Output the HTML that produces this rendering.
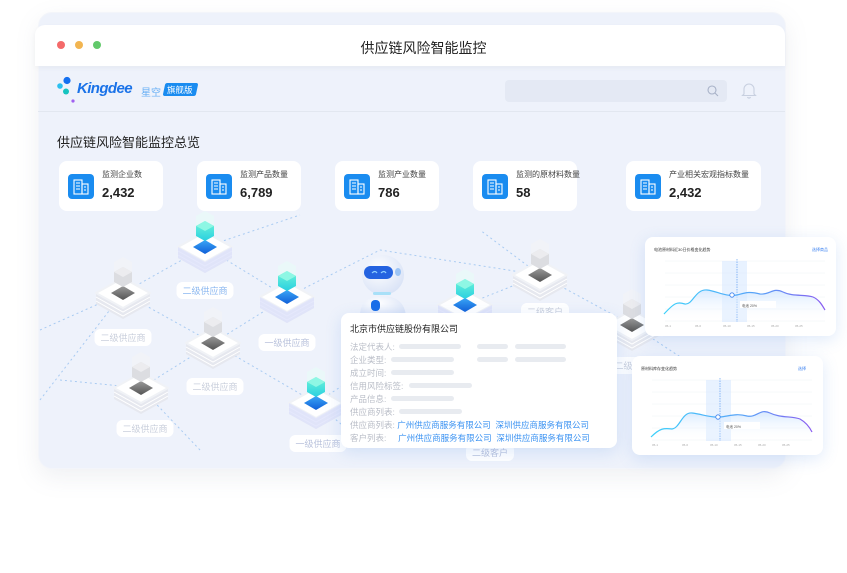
<!DOCTYPE html>
<html><head><meta charset="utf-8">
<style>
*{margin:0;padding:0;box-sizing:border-box}
body{width:847px;height:573px;background:#fff;font-family:"Liberation Sans","Noto Sans CJK SC",sans-serif;position:relative;overflow:hidden}
.abs{position:absolute}
.frame{left:38px;top:12px;width:748px;height:457px;border-radius:14px;background:#eef2fb;border:1px solid #f3f5fa;box-shadow:0 8px 24px rgba(120,130,160,.12)}
.titlebar{left:35px;top:25px;width:750px;height:41px;background:#fff;border-radius:10px 10px 0 0;box-shadow:0 2px 6px rgba(0,0,0,.04)}
.dot{width:8px;height:8px;border-radius:50%;top:41px}
.card{background:#fff;border-radius:8px;height:50px;top:161px}
.card .ic{position:absolute;left:9px;top:13px;width:26px;height:25px;background:#1a8cf0;border-radius:4px}
.card .t{position:absolute;left:43px;top:8px;font-size:8px;color:#444;white-space:nowrap}
.card .v{position:absolute;left:43px;top:24px;font-size:13px;font-weight:bold;color:#222}
.lbl{background:#fff;border-radius:6px;font-size:9px;color:#c9cfdc;padding:2px 6px;white-space:nowrap;transform:translateX(-50%)}
.pop{left:341px;top:313px;width:276px;height:135px;background:#fff;border-radius:8px;box-shadow:0 4px 16px rgba(80,140,230,.18)}
.row{position:absolute;left:9px;font-size:8.5px;color:#b9bdc7;white-space:nowrap}
.bar{position:absolute;height:5px;background:#e8ebf0;border-radius:3px}
.lnk{color:#3a92f2}
.chart{background:#fff;border-radius:8px;box-shadow:0 4px 16px rgba(80,140,230,.18)}
</style></head><body>
<div class="abs frame"></div>
<div class="abs titlebar"></div>
<div class="abs dot" style="left:57px;background:#f46a6a"></div>
<div class="abs dot" style="left:75px;background:#f2b551"></div>
<div class="abs dot" style="left:93px;background:#62c96b"></div>
<div class="abs" style="left:0;width:847px;top:38px;text-align:center;font-size:14px;color:#222">供应链风险智能监控</div>

<!-- header -->
<svg class="abs" style="left:56px;top:76px" width="22" height="28"><circle cx="11" cy="4.5" r="3.6" fill="#1570f0"/><circle cx="4" cy="10" r="2.8" fill="#2bc0f0"/><circle cx="10" cy="15.5" r="3" fill="#16c4c0"/><circle cx="17" cy="25" r="1.6" fill="#a060f0"/></svg>
<div class="abs" style="left:77px;top:80px;font-size:15px;font-weight:bold;font-style:italic;color:#1a72e8;letter-spacing:-.6px">Kingdee</div>
<div class="abs" style="left:141px;top:84px;font-size:10px;color:#6ab0f5">星空</div>
<div class="abs" style="left:164px;top:83px;width:33px;height:13px;background:#1a8cf0;transform:skewX(-12deg);border-radius:2px"></div>
<div class="abs" style="left:167px;top:84px;font-size:8.5px;color:#fff">旗舰版</div>
<div class="abs" style="left:505px;top:80px;width:222px;height:22px;background:#e4e9f4;border-radius:4px"></div>
<svg class="abs" style="left:706px;top:84px" width="14" height="14"><circle cx="6" cy="6" r="4" fill="none" stroke="#a8b2c8" stroke-width="1.1"/><path d="M9 9l3 3" stroke="#a8b2c8" stroke-width="1.1"/></svg>
<svg class="abs" style="left:741px;top:81px" width="16" height="18"><path d="M3 13V8a5 5 0 0 1 10 0v5l1.5 1.5h-13z" fill="none" stroke="#c8d0e0" stroke-width="1.1"/><path d="M6.5 16a1.6 1.6 0 0 0 3 0" fill="none" stroke="#c8d0e0" stroke-width="1.1"/></svg>
<div class="abs" style="left:38px;top:111px;width:747px;height:1px;background:#e2e7f0"></div>

<div class="abs" style="left:57px;top:132px;font-size:13px;color:#222">供应链风险智能监控总览</div>

<div class="abs card" style="left:59px;width:104px"><div class="ic"></div><div class="t">监测企业数</div><div class="v">2,432</div></div>
<div class="abs card" style="left:197px;width:104px"><div class="ic"></div><div class="t">监测产品数量</div><div class="v">6,789</div></div>
<div class="abs card" style="left:335px;width:104px"><div class="ic"></div><div class="t">监测产业数量</div><div class="v">786</div></div>
<div class="abs card" style="left:473px;width:104px"><div class="ic"></div><div class="t">监测的原材料数量</div><div class="v">58</div></div>
<div class="abs card" style="left:626px;width:135px"><div class="ic"></div><div class="t">产业相关宏观指标数量</div><div class="v">2,432</div></div>
<svg class="abs" style="left:0;top:0" width="847" height="573">
<defs>
<g id="bicon"><rect x="6" y="6" width="8" height="14" fill="none" stroke="#fff" stroke-width="1.1"/><rect x="14" y="10" width="6" height="10" fill="none" stroke="#fff" stroke-width="1.1"/><path d="M8 9h4M8 12h4M8 15h4M16 13h2M16 16h2" stroke="#fff" stroke-width="1"/></g>
<linearGradient id="chipG" x1="0" y1="0" x2="0" y2="1"><stop offset="0" stop-color="#9a9a9a"/><stop offset="1" stop-color="#555"/></linearGradient>
<linearGradient id="chipB" x1="0" y1="0" x2="0" y2="1"><stop offset="0" stop-color="#3aa6f6"/><stop offset="1" stop-color="#1060d8"/></linearGradient>
<linearGradient id="cubeT" x1="0" y1="0" x2="0" y2="1"><stop offset="0" stop-color="#6ff5d8"/><stop offset="1" stop-color="#2ad0e0"/></linearGradient>
<radialGradient id="head" cx=".4" cy=".35" r=".7"><stop offset="0" stop-color="#fff"/><stop offset="1" stop-color="#d8e2f6"/></radialGradient>
<g id="plat">
<path d="M3 40L30 55L57 40V51L30 66L3 51Z" fill="#e6e8ef"/>
<path d="M3 44L30 59L57 44M3 48L30 63L57 48" fill="none" stroke="#fff" stroke-width="1"/>
<path d="M30 25L57 40L30 55L3 40Z" fill="#fff" stroke="#f0f2f6" stroke-width="2" stroke-linejoin="round"/>
</g>
<g id="nodeG"><use href="#plat"/><path d="M30 33L42 40L30 47L18 40Z" fill="url(#chipG)"/><path d="M30 4L39 9V19L30 24L21 19V9Z" fill="#f2f3f6" opacity=".7"/><path d="M30 14L39 19V29L30 34L21 29V19Z" fill="#dcdde1"/><path d="M21 19L30 24L39 19L30 14Z" fill="#ececef"/></g>
<g id="nodeT"><use href="#plat"/><path d="M3 40L30 55L57 40V51L30 66L3 51Z" fill="#dfe2fb" opacity=".8"/><path d="M30 33L42 40L30 47L18 40Z" fill="url(#chipB)"/><path d="M30 4L39 9V19L30 24L21 19V9Z" fill="#e8fbf8" opacity=".7"/><path d="M30 14L39 19V29L30 34L21 29V19Z" fill="url(#cubeT)"/><path d="M21 19L30 24L39 19L30 14Z" fill="#8ef7e4"/></g>
</defs>
<use href="#bicon" x="68" y="174"/><use href="#bicon" x="206" y="174"/><use href="#bicon" x="344" y="174"/><use href="#bicon" x="482" y="174"/><use href="#bicon" x="635" y="174"/>
<g stroke="#a9cbf2" stroke-width="1" stroke-dasharray="2 3" fill="none">
<path d="M40 330L123 293L205 247L287 297L380 250L540 275L632 325L720 280"/>
<path d="M40 400L123 293L213 343L287 297"/>
<path d="M141 388L213 343L316 403L360 440"/>
<path d="M60 380L141 388L200 450"/>
<path d="M205 247L300 215M540 275L480 230M540 275L465 305"/>
<path d="M632 325L700 370M316 403L465 305"/>
</g>
<use href="#nodeT" x="175" y="207"/>
<use href="#nodeG" x="93" y="253"/>
<use href="#nodeT" x="257" y="257"/>
<use href="#nodeG" x="183" y="303"/>
<use href="#nodeG" x="111" y="348"/>
<use href="#nodeT" x="286" y="363"/>
<use href="#nodeG" x="510" y="235"/>
<use href="#nodeG" x="602" y="285"/>
<use href="#nodeT" x="435" y="265"/>
<!-- robot -->
<g>
<path d="M360 316q0-20 22-20q22 0 24 20z" fill="url(#head)"/>
<ellipse cx="383" cy="275" rx="21" ry="20" fill="url(#head)"/>
<rect x="364" y="266" width="29" height="13" rx="6.5" fill="#2563e0"/>
<path d="M372 273q3-3 5 0M381 273q3-3 5 0" stroke="#8fd0ff" fill="none" stroke-width="1.2"/>
<ellipse cx="398" cy="272" rx="3" ry="4" fill="#9cc4f4"/>
<rect x="373" y="292" width="18" height="3" rx="1.5" fill="#a8e0f8"/>
<rect x="371" y="300" width="9" height="11" rx="4" fill="#1a6ee8"/>
</g>
</svg>

<div class="abs lbl" style="left:205px;top:282px;color:#8cb8f0">二级供应商</div>
<div class="abs lbl" style="left:123px;top:329px">二级供应商</div>
<div class="abs lbl" style="left:287px;top:334px;color:#b9c2dc">一级供应商</div>
<div class="abs lbl" style="left:215px;top:378px">二级供应商</div>
<div class="abs lbl" style="left:145px;top:420px">二级供应商</div>
<div class="abs lbl" style="left:318px;top:435px;color:#b9c2dc">一级供应商</div>
<div class="abs lbl" style="left:545px;top:303px">二级客户</div>
<div class="abs lbl" style="left:490px;top:444px;color:#b9c2dc">二级客户</div>
<div class="abs lbl" style="left:628px;top:357px">二级客</div>

<div class="abs pop">
<div class="abs" style="left:9px;top:9px;font-size:9px;color:#222">北京市供应链股份有限公司</div>
<div class="row" style="top:28px">法定代表人:</div><div class="bar" style="left:58px;top:31px;width:62px"></div><div class="bar" style="left:136px;top:31px;width:31px"></div><div class="bar" style="left:174px;top:31px;width:51px"></div>
<div class="row" style="top:41px">企业类型:</div><div class="bar" style="left:50px;top:44px;width:63px"></div><div class="bar" style="left:136px;top:44px;width:31px"></div><div class="bar" style="left:174px;top:44px;width:51px"></div>
<div class="row" style="top:54px">成立时间:</div><div class="bar" style="left:50px;top:57px;width:63px"></div>
<div class="row" style="top:67px">信用风险标签:</div><div class="bar" style="left:68px;top:70px;width:63px"></div>
<div class="row" style="top:80px">产品信息:</div><div class="bar" style="left:50px;top:83px;width:63px"></div>
<div class="row" style="top:93px">供应商列表:</div><div class="bar" style="left:58px;top:96px;width:63px"></div>
<div class="row" style="top:106px">供应商列表: <span class="lnk">广州供应商服务有限公司</span>&nbsp; <span class="lnk">深圳供应商服务有限公司</span></div>
<div class="row" style="top:119px">客户列表:&nbsp;&nbsp;&nbsp;&nbsp; <span class="lnk">广州供应商服务有限公司</span>&nbsp; <span class="lnk">深圳供应商服务有限公司</span></div>
</div>

<div class="abs chart" style="left:645px;top:237px;width:191px;height:99px">
<svg width="191" height="99" style="position:absolute;left:0;top:0">
<defs><linearGradient id="ln" x1="0" x2="1"><stop offset="0" stop-color="#3cd0fa"/><stop offset=".6" stop-color="#5aa0f8"/><stop offset="1" stop-color="#8a5af0"/></linearGradient>
<linearGradient id="ar" x1="0" y1="0" x2="0" y2="1"><stop offset="0" stop-color="#cfe5ff" stop-opacity=".8"/><stop offset="1" stop-color="#fff" stop-opacity="0"/></linearGradient></defs>
<text x="9" y="14" font-size="4" fill="#333">电池原材料近30日价格变化趋势</text><text x="167" y="14" font-size="4" fill="#3a80f0">选择商品</text>
<g stroke="#eef1f6" stroke-width=".5"><path d="M20 24H180M20 36H180M20 48H180M20 60H180M20 72H180M20 84H180"/></g>
<rect x="77" y="24" width="25" height="61" fill="#d8eaff" opacity=".6"/>
<path d="M92 22V85" stroke="#4a90f0" stroke-width=".6" stroke-dasharray="1.5 1"/>
<path d="M19 77C30 65 32 65 40 67C48 68 50 52 62 53C72 54 80 60 92 58C100 56 104 54 115 57C125 58 128 50 138 55C148 60 160 57 168 60C175 63 178 70 180 73V85H19Z" fill="url(#ar)"/>
<path d="M19 77C30 65 32 65 40 67C48 68 50 52 62 53C72 54 80 60 92 58C100 56 104 54 115 57C125 58 128 50 138 55C148 60 160 57 168 60C175 63 178 70 180 73" fill="none" stroke="url(#ln)" stroke-width="1.2"/>
<circle cx="87" cy="58" r="2.2" fill="#fff" stroke="#3a80f0" stroke-width=".8"/>
<rect x="95" y="64" width="36" height="7" fill="#fff"/><text x="97" y="70" font-size="3.5" fill="#555">电池  20%</text>
<g font-size="3" fill="#aaa"><text x="20" y="90">05-1</text><text x="50" y="90">05-6</text><text x="78" y="90">05-10</text><text x="102" y="90">05-15</text><text x="126" y="90">05-20</text><text x="150" y="90">05-25</text></g>
</svg></div>

<div class="abs chart" style="left:632px;top:356px;width:191px;height:99px">
<svg width="191" height="99" style="position:absolute;left:0;top:0">
<text x="9" y="14" font-size="4" fill="#333">原材料库存变化趋势</text><text x="166" y="14" font-size="4" fill="#3a80f0">选择</text>
<g stroke="#eef1f6" stroke-width=".5"><path d="M20 24H180M20 36H180M20 48H180M20 60H180M20 72H180M20 84H180"/></g>
<rect x="74" y="24" width="25" height="61" fill="#d8eaff" opacity=".6"/>
<path d="M88 22V85" stroke="#4a90f0" stroke-width=".6" stroke-dasharray="1.5 1"/>
<path d="M19 81C28 72 32 72 40 73C48 72 50 56 60 57C70 58 78 62 88 61C98 60 104 57 115 60C125 62 128 52 138 57C148 62 160 60 168 63C175 67 178 72 180 76V85H19Z" fill="url(#ar)"/>
<path d="M19 81C28 72 32 72 40 73C48 72 50 56 60 57C70 58 78 62 88 61C98 60 104 57 115 60C125 62 128 52 138 57C148 62 160 60 168 63C175 67 178 72 180 76" fill="none" stroke="url(#ln)" stroke-width="1.2"/>
<circle cx="86" cy="61" r="2.2" fill="#fff" stroke="#3a80f0" stroke-width=".8"/>
<rect x="92" y="66" width="36" height="7" fill="#fff"/><text x="94" y="72" font-size="3.5" fill="#555">电池  20%</text>
<g font-size="3" fill="#aaa"><text x="20" y="90">05-1</text><text x="50" y="90">05-6</text><text x="78" y="90">05-10</text><text x="102" y="90">05-15</text><text x="126" y="90">05-20</text><text x="150" y="90">05-25</text></g>
</svg></div>
</body></html>
